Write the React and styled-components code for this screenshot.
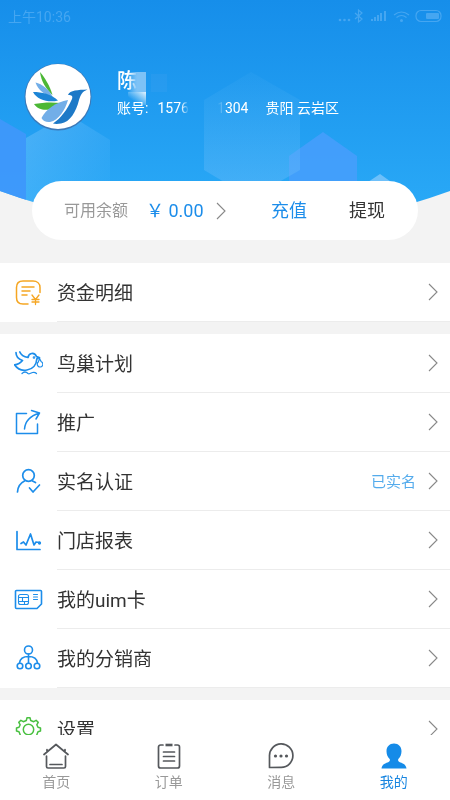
import React from 'react'
import styled, { createGlobalStyle } from 'styled-components'

const GlobalStyle = createGlobalStyle`
    * { box-sizing: border-box; }
    body {
        margin: 0;
        background: #f3f3f3;
        font-family: Roboto, "Noto Sans CJK SC", sans-serif;
        color: #333;
    }
    button {
        padding: 0;
        border: 0;
        background: none;
        font: inherit;
        cursor: pointer;
    }
    a { color: inherit; text-decoration: none; }
`

const Screen = styled.div`
    display: flex;
    flex-direction: column;
    height: 100vh;
`

const Content = styled.main`
    flex: 1;
    min-height: 0;
    overflow-y: auto;
    scrollbar-width: none;
`

const Header = styled.header`
    position: relative;
    padding-bottom: 23px;
`

const Backdrop = styled.svg`
    position: absolute;
    top: 0;
    left: 0;
    width: 100%;
    height: 216px;
    z-index: -1;
`

const StatusBar = styled.div`
    display: flex;
    justify-content: space-between;
    align-items: center;
    height: 32px;
    padding: 0 7px 0 8px;
    font-size: 14px;
    color: #45a6f1;
`

const Profile = styled.section`
    display: flex;
    align-items: center;
    gap: 25px;
    height: 149px;
    padding: 0 24px 19px;
    color: #fff;
`

const Avatar = styled.svg`
    flex: none;
    width: 68px;
    height: 68px;
`

const Details = styled.div`
    padding-bottom: 6px;
`

const Name = styled.h1`
    display: flex;
    align-items: flex-start;
    height: 26px;
    margin: 0 0 2px;
    font-size: 20px;
    font-weight: 500;
    line-height: 24px;
`

const Mosaic = styled.svg`
    width: 58px;
    height: 34px;
    margin: 3px 0 0 -9px;
`

const Account = styled.p`
    display: flex;
    margin: 0;
    font-size: 14px;
    line-height: 22px;
    white-space: nowrap;
`

const Digits = styled.span`
    margin-left: 9px;
    mask-image: linear-gradient(to right, #000 75%, transparent);
`

const Hidden = styled.span`
    width: 36px;
    text-align: right;
    mask-image: linear-gradient(to left, #0006, transparent 8px);
`

const Place = styled.span`
    margin-left: 17px;
`

const Balance = styled.section`
    display: flex;
    align-items: center;
    height: 59px;
    margin: 0 32px;
    padding: 0 33px 0 32px;
    border-radius: 30px;
    background: #fff;
    font-size: 18px;
    line-height: 26px;
`

const BalanceLabel = styled.span`
    font-size: 16px;
    color: #999;
`

const Amount = styled.a`
    display: flex;
    align-items: center;
    gap: 12px;
    margin-left: 18px;
    color: #1c8dea;
`

const Action = styled.button`
    margin-left: ${props => props.$primary ? 'auto' : '42px'};
    color: ${props => props.$primary ? '#1c8dea' : '#333'};
`

const Group = styled.ul`
    margin: 0 0 12px;
    padding: 0;
    list-style: none;
    background: #fff;
`

const Row = styled.a`
    display: flex;
    align-items: center;
    height: 59px;
    padding-left: 14px;
`

const RowIcon = styled.svg`
    flex: none;
    width: 29px;
    height: 28px;
    margin: 0 14px 2px 0;
    color: ${props => props.color};
`

const RowBody = styled.span`
    flex: 1;
    display: flex;
    align-items: center;
    height: 59px;
    padding-right: 12px;
    border-bottom: 1px solid #ececec;
`

const Label = styled.span`
    flex: 1;
    padding-bottom: 2px;
    font-size: 19px;
`

const Note = styled.span`
    padding: 0 12px 2px 0;
    font-size: 15px;
    color: #54abec;
`

const ArrowIcon = styled.svg`
    flex: none;
    width: 10px;
    height: 18px;
`

const TabBar = styled.nav`
    display: flex;
    height: 65px;
    background: #fff;
`

const Tab = styled.a`
    flex: 1;
    display: flex;
    flex-direction: column;
    align-items: center;
    padding-top: 7px;
    font-size: 14px;
    line-height: 24px;
    color: ${props => props.$active ? '#1785e0' : '#999'};

    svg {
        width: 28px;
        height: 28px;
        color: ${props => props.$active ? '#158be8' : '#55585c'};
    }
`

const line = { fill: 'none', stroke: 'currentColor', strokeWidth: 1.5, strokeLinecap: 'round', strokeLinejoin: 'round' }

const Arrow = () => (
    <ArrowIcon viewBox="0 0 10 18" aria-hidden="true">
        <path d="M1 1l8 8-8 8" fill="none" stroke="#888" strokeWidth="1.1" />
    </ArrowIcon>
)

const icons = {
    funds: (
        <g {...line}>
            <path d="M14 26H9C5 26 2.500 23.500 2.500 19.500V9.500C2.500 5.500 5 3 9 3h10c4 0 7 2.500 7 6.500v5M8 9h12M8 13h8M8 17h5" />
            <path strokeWidth="1.300" d="M18 17l3.500 4.500L25 17M21.500 21.500V26.500M18 21.500h7M18 24h7" />
        </g>
    ),
    bird: (
        <g {...line} strokeWidth="1.700">
            <path d="M2 3.500c0 4 2 6.500 6.500 8-2 2.500-5 4-8 4.300 3 4.500 7.500 6.200 12.500 5.200 6-1 9.500-5.500 9.800-11 .9-.8 1.800-1.200 2.700-1.300-.9-.6-1.700-.7-2.900-1-1-2.500-3-3.500-5-3.200-2 .4-3.300 2-3.600 4-4-.7-7-2.500-8.200-5.500" />
            <path strokeWidth="1.200" d="M25 8.700c.5 1 .3 2.300-.7 4.300a2.800 2.800 0 1 0 3-.3c-.8-1.200-1.500-2.200-2-4M8 24.500c2-2 4-2 6 0 1.500 1 3-.500 4.500-1s3 0 4 1" />
            <circle cx="20" cy="8.500" r=".5" />
        </g>
    ),
    share: (
        <g {...line}>
            <path d="M12.500 5.500H2.500V25.500h21V16M10.500 21C11 14 16 8 25.500 5M17.500 2.500l8 2.500-3.500 6" />
        </g>
    ),
    verify: (
        <g {...line} strokeWidth="1.700">
            <circle cx="14.500" cy="8.500" r="5.800" />
            <path d="M3.500 25c.3-5 3-9 7-11M18.500 14l3 1.500M15.500 21l3.500 4 6.500-7" />
        </g>
    ),
    report: (
        <g {...line} strokeWidth="1.700">
            <path d="M3 5.500V23.500h23M7 17.500l2.500-1.500 2.500 3L16.500 8l3.500 11 2-3 3 .500" />
            <circle cx="25.500" cy="17" r=".8" fill="currentColor" />
        </g>
    ),
    sim: (
        <g {...line} strokeWidth="1.600">
            <path d="M2.500 5.500h24a1 1 0 0 1 1 1v12.500l-4.500 4.500H2.500a1 1 0 0 1-1-1v-16a1 1 0 0 1 1-1z" />
            <path strokeWidth="1.100" d="M6.500 9.500h6a2 2 0 0 1 2 2v6a2 2 0 0 1-2 2h-6a2 2 0 0 1-2-2v-6a2 2 0 0 1 2-2zM4.500 12.500h10M4.500 16.500h4M14.500 16.500h-4M8.500 12.500v4h2v3M19.500 9.500h4M19.500 12h4M19.500 14.500h4" />
        </g>
    ),
    tree: (
        <g {...line} strokeWidth="1.600">
            <circle cx="14.500" cy="6" r="4" />
            <circle cx="6" cy="22" r="2.800" />
            <circle cx="14.500" cy="22" r="2.800" />
            <circle cx="23" cy="22" r="2.800" />
            <path d="M14.500 10v9M5.500 19c.5-4 4-6.500 9-6.500s8.500 2.500 9 6.500" />
        </g>
    ),
    gear: (
        <g {...line}>
            <circle cx="14.500" cy="14.500" r="5.200" />
            <path d="M12.300 5.500l.7-2.700h3l.7 2.700 3 1.200 2.400-1.400 2.100 2.100-1.400 2.400 1.200 2.500 2.500.7v3l-2.500.7-1.200 3 1.400 2.300-2.100 2.100-2.400-1.400-3 1.200-.7 2.600h-3l-.7-2.600-3-1.200-2.400 1.400-2.100-2.100 1.400-2.300-1.200-3-2.500-.7v-3l2.500-.7 1.200-2.500-1.400-2.400 2.100-2.100 2.400 1.400z" />
        </g>
    ),
}

const tabIcons = {
    home: (
        <g {...line} strokeWidth="1.700">
            <path d="M2 12.500L14 2.500l12 10M5 10V7.500M23 10V7.500M4.500 14v10.500A1.500 1.500 0 0 0 6 26h16a1.500 1.500 0 0 0 1.500-1.500V14M8 22.500h12" />
        </g>
    ),
    orders: (
        <g {...line} strokeWidth="1.700">
            <path d="M8 3H5.500A2 2 0 0 0 3.500 5v19a2 2 0 0 0 2 2h17a2 2 0 0 0 2-2V5a2 2 0 0 0-2-2H20M8.500 10h11M8.500 14.500h11M8.500 19h11" />
            <path strokeWidth="2.600" strokeLinecap="butt" d="M10.500 3h7" />
        </g>
    ),
    messages: (
        <g {...line} strokeWidth="1.700">
            <path d="M2.500 25.500V14a11.700 11.700 0 1 1 11.700 11.300z" />
            <g fill="currentColor" stroke="none">
                <circle cx="8.500" cy="14" r="1.600" />
                <circle cx="14" cy="14" r="1.600" />
                <circle cx="19.500" cy="14" r="1.600" />
            </g>
        </g>
    ),
    mine: (
        <path fill="currentColor" d="M14 1.500c4.500 0 7.500 3.200 7.500 7.700 0 3.300-1.200 6-3.200 7.800-.5 1.500 0 2.500 1.500 3.200 3.500 1.300 6 2 6.700 6.300h-25c.7-4.300 3.200-5 6.700-6.300 1.500-.7 2-1.700 1.500-3.200-2-1.800-3.200-4.500-3.200-7.800 0-4.500 3-7.700 7.500-7.700z" />
    ),
}

const groups = [
    [{ icon: 'funds', label: '资金明细', color: '#f5a623' }],
    [
        { icon: 'bird', label: '鸟巢计划' },
        { icon: 'share', label: '推广' },
        { icon: 'verify', label: '实名认证', note: '已实名' },
        { icon: 'report', label: '门店报表' },
        { icon: 'sim', label: '我的uim卡' },
        { icon: 'tree', label: '我的分销商' },
    ],
    [{ icon: 'gear', label: '设置', color: '#49c041' }],
]

const tabs = [
    { icon: 'home', label: '首页' },
    { icon: 'orders', label: '订单' },
    { icon: 'messages', label: '消息' },
    { icon: 'mine', label: '我的', active: true },
]

const HeaderBackdrop = () => (
    <Backdrop viewBox="0 0 450 216" preserveAspectRatio="none" aria-hidden="true">
        <defs>
            <linearGradient id="sky" x1="0" y1="0" x2="0" y2="1">
                <stop offset="0" stopColor="#168eea" />
                <stop offset="1" stopColor="#2aaaf7" />
            </linearGradient>
            <linearGradient id="glass" x1="0" y1="0" x2="0" y2="1">
                <stop offset="0" stopColor="#5db8f5" stopOpacity=".08" />
                <stop offset="1" stopColor="#6cbcfa" stopOpacity=".45" />
            </linearGradient>
            <linearGradient id="pane" x1="0" y1="0" x2="1" y2="1">
                <stop offset="0" stopColor="#8accff" stopOpacity=".4" />
                <stop offset="1" stopColor="#6ec0ff" stopOpacity="0" />
            </linearGradient>
            <clipPath id="bowl">
                <path d="M0 0h450v191q-110 40-225 40T0 191z" />
            </clipPath>
        </defs>
        <g clipPath="url(#bowl)">
            <rect width="450" height="216" fill="url(#sky)" />
            <path d="M0 119l26 15v82H0z" fill="#4296fb" opacity=".85" />
            <path d="M26 138l42-24 42 26v60l-42 24-42-24z" fill="url(#pane)" />
            <path d="M289 156l34-24 34 24v50h-68z" fill="#4a9efc" opacity=".8" />
            <path d="M251 72l49 28v70l-49 28-47-28v-70z" fill="url(#glass)" />
            <path d="M368 182l12-8 14 10z" fill="#6ec0fa" />
        </g>
    </Backdrop>
)

const StatusIcons = () => (
    <svg width="106" height="16" viewBox="0 0 106 16" fill="none" stroke="currentColor" strokeWidth="1.200" aria-hidden="true">
        <g fill="currentColor" stroke="none">
            <circle cx="3" cy="12" r="1.300" />
            <circle cx="7.500" cy="12" r="1.300" />
            <circle cx="12" cy="12" r="1.300" />
            <path d="M34 13h2v-2h-2zM37 13h2V9h-2zM40 13h2V7h-2zM43 13h2V5h-2zM47 13h2V3h-2z" />
            <circle cx="64.500" cy="12.500" r="1.500" />
            <rect x="89" y="5" width="13" height="6" rx="1" />
        </g>
        <path d="M18 5l7 6-3.500 3V2L25 5l-7 6M57 7q7.500-6 15 0M59.500 9.500q5-4 10 0" />
        <rect x="79" y="2.500" width="25" height="11" rx="5" />
    </svg>
)

const Logo = () => (
    <Avatar viewBox="0 0 68 68" role="img" aria-label="头像">
        <circle cx="34" cy="34" r="33.500" fill="#3c79b8" />
        <circle cx="34" cy="33.500" r="32.500" fill="#fff" />
        <path d="M16 9c5 6 10 14 12.500 23C22 26 17 18 16 9z" fill="#4bb735" />
        <path d="M11.500 19.500C18 21 25 26 29 34.500 21 32 14 27 11.500 19.500z" fill="#72aee8" />
        <path d="M9 29c9 0 18 2 25 8.500C25 40 13 37 9 29z" fill="#1d85d6" />
        <path d="M10 41c8-1.500 18-2 26.500-1C31 46.500 17 51 10 41z" fill="#4bb735" />
        <path d="M44 37C41 47 35 57 26 59c-4 .5-7-1-8.500-4C22 46 32 39 44 37z" fill="#72aee8" />
        <path d="M44 32c2-5 10-5 19.500-5.500C58 29 57 31 55 37c-3 12-9 22-18 23.500-3 .5-6 .5-8 0C37 55 43 47 48 36c1-3 0-4-4-4z" fill="#1d79c7" />
    </Avatar>
)

export default function App() {
    return (
        <Screen>
            <GlobalStyle />
            <Content>
                <Header>
                    <HeaderBackdrop />
                    <StatusBar>
                        <span>上午10:36</span>
                        <StatusIcons />
                    </StatusBar>
                    <Profile>
                        <Logo />
                        <Details>
                            <Name>
                                陈
                                <Mosaic viewBox="0 0 58 34" aria-hidden="true">
                                    <defs>
                                        <linearGradient id="patch" x1="0" y1="0" x2="1" y2="0">
                                            <stop offset="0" stopColor="#9fd3f9" stopOpacity="0" />
                                            <stop offset=".5" stopColor="#7dc2f6" />
                                        </linearGradient>
                                        <linearGradient id="glow" x1="0" y1="1" x2="1" y2="0">
                                            <stop offset=".3" stopColor="#d9effd" stopOpacity="0" />
                                            <stop offset="1" stopColor="#e6f4fe" />
                                        </linearGradient>
                                    </defs>
                                    <path d="M0 0h18v20H0z" fill="url(#patch)" />
                                    <path d="M23 2h16v18H23z" fill="#4ba5ee" opacity=".2" />
                                    <path d="M0 20h18v13H0z" fill="url(#glow)" />
                                </Mosaic>
                            </Name>
                            <Account>
                                <span>账号:</span>
                                <Digits>1576</Digits>
                                <Hidden>1</Hidden>
                                <span>304</span>
                                <Place>贵阳 云岩区</Place>
                            </Account>
                        </Details>
                    </Profile>
                    <Balance>
                        <BalanceLabel>可用余额</BalanceLabel>
                        <Amount href="#balance">￥ 0.00 <Arrow /></Amount>
                        <Action type="button" $primary>充值</Action>
                        <Action type="button">提现</Action>
                    </Balance>
                </Header>
                {groups.map((rows, i) => (
                    <Group key={i}>
                        {rows.map(row => (
                            <li key={row.icon}>
                                <Row href={`#${row.icon}`}>
                                    <RowIcon viewBox="0 0 29 28" color={row.color || '#1c8dea'} aria-hidden="true">
                                        {icons[row.icon]}
                                    </RowIcon>
                                    <RowBody>
                                        <Label>{row.label}</Label>
                                        {row.note && <Note>{row.note}</Note>}
                                        <Arrow />
                                    </RowBody>
                                </Row>
                            </li>
                        ))}
                    </Group>
                ))}
            </Content>
            <TabBar>
                {tabs.map(tab => (
                    <Tab key={tab.icon} href={`#${tab.icon}`} $active={tab.active}>
                        <svg viewBox="0 0 28 28" aria-hidden="true">{tabIcons[tab.icon]}</svg>
                        {tab.label}
                    </Tab>
                ))}
            </TabBar>
        </Screen>
    )
}
